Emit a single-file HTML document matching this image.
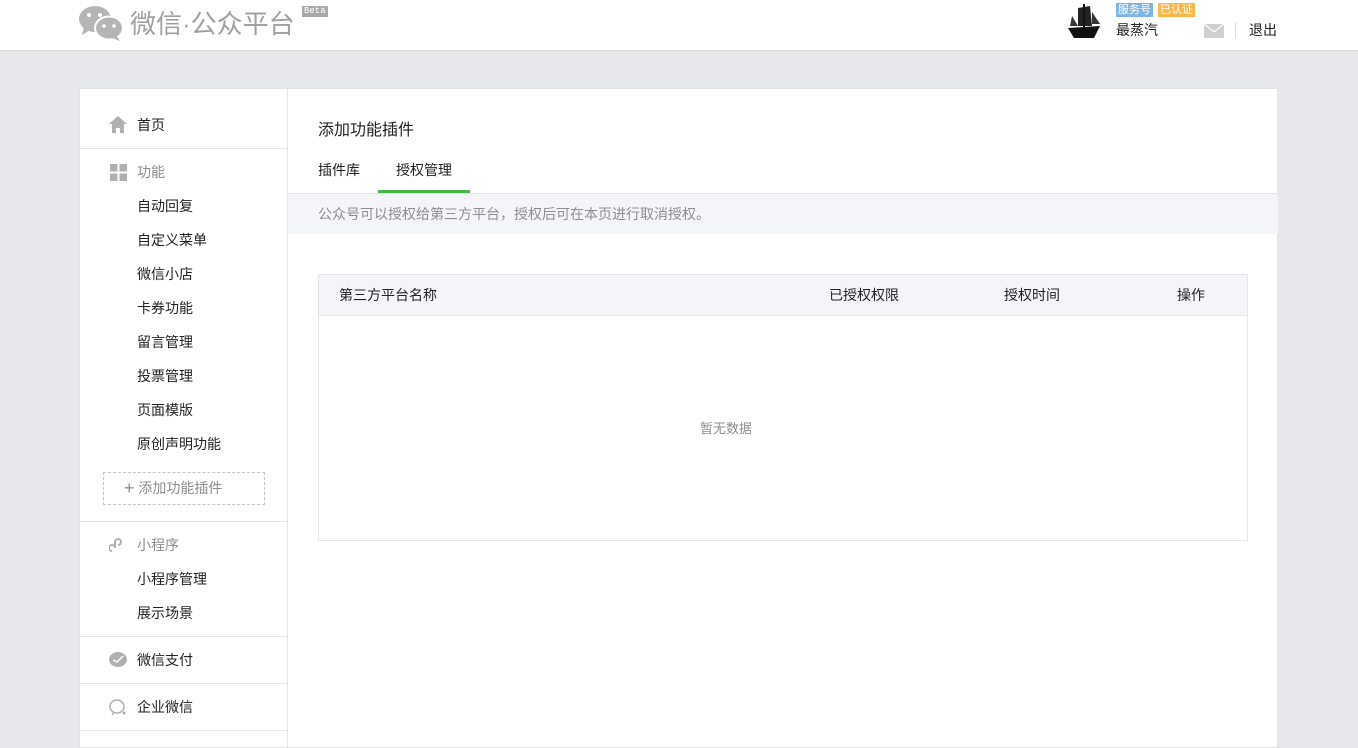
<!DOCTYPE html>
<html><head><meta charset="utf-8"><style>
*{margin:0;padding:0;box-sizing:border-box}
body{width:1358px;height:742px;overflow:hidden;background:#e7e8eb;font-family:"Liberation Sans","Noto Sans CJK SC",sans-serif;font-size:14px;color:#222;position:relative}
.hd{position:absolute;left:0;top:0;width:1358px;height:51px;background:#fff;border-bottom:1px solid #dcdcdc}
.abs{position:absolute}
.box{position:absolute;left:79px;top:88px;width:1199px;height:660px;background:#fff;border:1px solid #e1e2e6}
.side{position:absolute;left:0;top:0;width:208px;height:100%;border-right:1px solid #e4e5e9}
.sep{position:absolute;left:0;width:208px;height:1px;background:#e4e5e9}
.it{position:absolute;left:57px;font-size:14px;color:#222}
.g{color:#8d8d8d}
</style></head><body>
<div class="hd">
<svg class="abs" style="left:78px;top:5px" width="46" height="36" viewBox="0 0 46 36"><ellipse cx="17" cy="14" rx="16" ry="13" fill="#b5b5b5"/><path d="M6 22 L4 30 L12 25Z" fill="#b5b5b5"/><ellipse cx="31" cy="23" rx="14" ry="11.5" fill="#b5b5b5" stroke="#fff" stroke-width="2"/><path d="M38 30 L42 36 L34 33Z" fill="#b5b5b5"/><circle cx="11" cy="10" r="2" fill="#fff"/><circle cx="22" cy="10" r="2" fill="#fff"/><circle cx="26" cy="21" r="1.8" fill="#fff"/><circle cx="36" cy="21" r="1.8" fill="#fff"/></svg>
<div class="abs" style="left:130px;top:4px;font-size:26px;color:#a0a0a0">微信·公众平台</div>
<div class="abs" style="left:302px;top:6px;background:#a9a9a9;color:#fff;font-size:9px;font-family:'Liberation Mono',monospace;padding:0 2px;line-height:11px">Beta</div>
<svg class="abs" style="left:1064px;top:2px" width="40" height="40" viewBox="0 0 40 40"><path d="M4 26 L36 24 L30 36 L10 36Z" fill="#111"/><path d="M14 24 L14 6 L26 4 L28 24Z" fill="#222"/><path d="M20 2 L20 26" stroke="#111" stroke-width="2"/><path d="M28 10 L36 22 L28 22Z" fill="#333"/><path d="M8 14 L14 24 L6 24Z" fill="#333"/></svg>
<div class="abs" style="left:1116px;top:3px;background:#7fb5e2;color:#fff;font-size:11px;line-height:14px;padding:0 2px">服务号</div>
<div class="abs" style="left:1158px;top:3px;background:#f7b84d;color:#fff;font-size:11px;line-height:14px;padding:0 2px">已认证</div>
<div class="abs" style="left:1116px;top:20px;font-size:14px">最蒸汽</div>
<div class="abs" style="left:1204px;top:24px;width:20px;height:14px;background:#d0d0d0"><svg width="20" height="14"><path d="M0 0 L10 8 L20 0" stroke="#fff" fill="none" stroke-width="1.2"/></svg></div>
<div class="abs" style="left:1235px;top:22px;width:1px;height:16px;background:#e0e0e0"></div>
<div class="abs" style="left:1249px;top:20px;font-size:14px">退出</div>
</div>
<div class="box">
<div class="side">
<svg class="abs" style="left:29px;top:27px" width="18" height="17" viewBox="0 0 18 17"><path d="M9 0 L18 8 L15 8 L15 17 L11 17 L11 12 L7 12 L7 17 L3 17 L3 8 L0 8Z" fill="#b0b0b0"/></svg>
<div class="it" style="top:26px">首页</div>
<div class="sep" style="top:59px"></div>
<svg class="abs" style="left:30px;top:75px" width="17" height="17"><rect width="7.5" height="7.5" fill="#b0b0b0"/><rect x="9.5" width="7.5" height="7.5" fill="#b0b0b0"/><rect y="9.5" width="7.5" height="7.5" fill="#b0b0b0"/><rect x="9.5" y="9.5" width="7.5" height="7.5" fill="#b0b0b0"/></svg>
<div class="it g" style="top:73px">功能</div>
<div class="it" style="top:107px">自动回复</div>
<div class="it" style="top:141px">自定义菜单</div>
<div class="it" style="top:175px">微信小店</div>
<div class="it" style="top:209px">卡券功能</div>
<div class="it" style="top:243px">留言管理</div>
<div class="it" style="top:277px">投票管理</div>
<div class="it" style="top:311px">页面模版</div>
<div class="it" style="top:345px">原创声明功能</div>
<div class="abs" style="left:23px;top:383px;width:162px;height:33px;border:1px dashed #c5c5c5;color:#8d8d8d;font-size:14px;line-height:31px;padding-left:20px"><span style="font-size:18px;vertical-align:-1px">+</span> 添加功能插件</div>
<div class="sep" style="top:432px"></div>
<svg class="abs" style="left:29px;top:447px" width="18" height="18" viewBox="0 0 18 18"><path d="M3 15 a3 3 0 1 1 3-3 V6 a3 3 0 1 1 3 3" fill="none" stroke="#b0b0b0" stroke-width="2"/></svg>
<div class="it g" style="top:446px">小程序</div>
<div class="it" style="top:480px">小程序管理</div>
<div class="it" style="top:514px">展示场景</div>
<div class="sep" style="top:547px"></div>
<svg class="abs" style="left:29px;top:563px" width="18" height="16" viewBox="0 0 18 16"><ellipse cx="9" cy="7.5" rx="9" ry="7.5" fill="#b0b0b0"/><path d="M4 8 L8 10 L14 4" stroke="#fff" stroke-width="1.5" fill="none"/></svg>
<div class="it" style="top:561px">微信支付</div>
<div class="sep" style="top:594px"></div>
<svg class="abs" style="left:29px;top:610px" width="18" height="17" viewBox="0 0 18 17"><ellipse cx="8" cy="7.5" rx="7" ry="6.5" fill="none" stroke="#b0b0b0" stroke-width="1.5"/><path d="M5 13 L3 16" stroke="#b0b0b0" stroke-width="1.5"/><circle cx="15" cy="14" r="1.5" fill="#b0b0b0"/></svg>
<div class="it" style="top:608px">企业微信</div>
<div class="sep" style="top:641px"></div>
</div>
<div class="abs" style="left:238px;top:27px;font-size:16px">添加功能插件</div>
<div class="abs" style="left:238px;top:71px">插件库</div>
<div class="abs" style="left:316px;top:71px">授权管理</div>
<div class="abs" style="left:298px;top:101px;width:92px;height:3px;background:#44b549"></div>
<div class="abs" style="left:208px;top:104px;width:990px;height:41px;background:#f4f5f9;border-top:1px solid #e4e5e9;color:#8d8d8d;padding:10px 0 0 30px">公众号可以授权给第三方平台，授权后可在本页进行取消授权。</div>
<div class="abs" style="left:238px;top:185px;width:930px;height:267px;border:1px solid #e4e5e9">
<div style="height:41px;background:#f4f5f9;border-bottom:1px solid #e4e5e9;position:relative">
<span class="abs" style="left:20px;top:10px">第三方平台名称</span>
<span class="abs" style="left:510px;top:10px">已授权权限</span>
<span class="abs" style="left:685px;top:10px">授权时间</span>
<span class="abs" style="left:858px;top:10px">操作</span>
</div>
<div class="abs" style="left:381px;top:143px;color:#8d8d8d;font-size:13px">暂无数据</div>
</div>
</div>
</body></html>
